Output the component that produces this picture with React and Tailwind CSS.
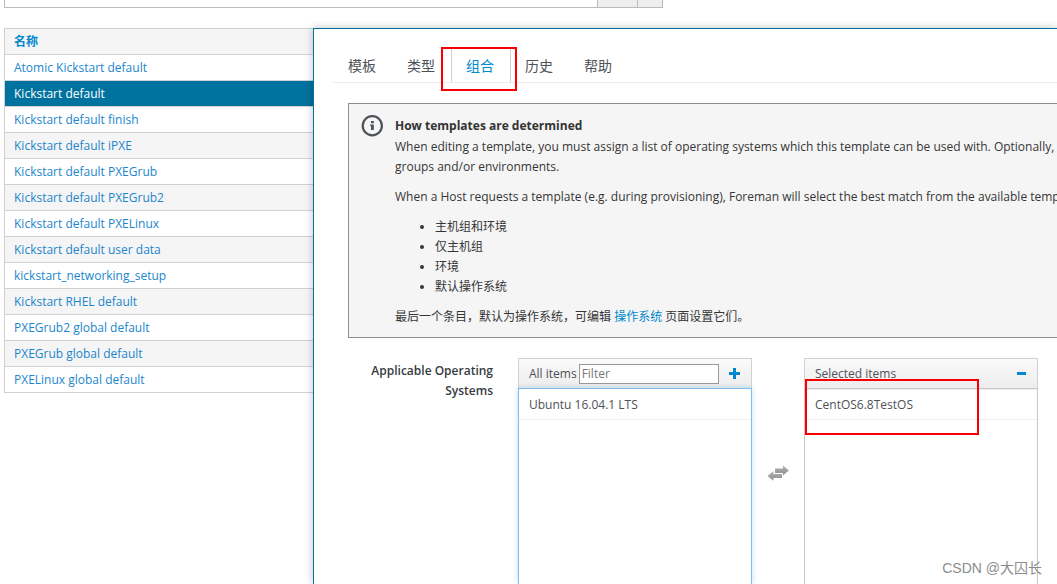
import React from 'react';

const templates = [
  'Atomic Kickstart default',
  'Kickstart default',
  'Kickstart default finish',
  'Kickstart default iPXE',
  'Kickstart default PXEGrub',
  'Kickstart default PXEGrub2',
  'Kickstart default PXELinux',
  'Kickstart default user data',
  'kickstart_networking_setup',
  'Kickstart RHEL default',
  'PXEGrub2 global default',
  'PXEGrub global default',
  'PXELinux global default',
];

const tabs = ['模板', '类型', '组合', '历史', '帮助'];

function SearchBar() {
  return (
    <form className="ml-1 flex h-2 w-[659px] items-end overflow-hidden">
      <input
        type="text"
        aria-label="Search"
        className="h-[26px] min-w-0 flex-1 border border-[#bbbbbb] bg-white px-2"
      />
      <button
        type="button"
        aria-label="Run search"
        className="-ml-px h-[26px] w-[41px] border border-[#bbbbbb] bg-[#eeeeee]"
      />
      <button
        type="button"
        aria-label="Search options"
        className="-ml-px h-[26px] w-[26px] border border-[#bbbbbb] bg-[#eeeeee]"
      />
    </form>
  );
}

function TemplateTable() {
  return (
    <table className="ml-1 w-[309px] shrink-0 border-separate border-spacing-0 self-start border-b border-l border-[#d1d1d1] text-left">
      <thead>
        <tr className="bg-[#f5f5f5]">
          <th className="h-[26px] border-t border-[#d1d1d1] px-[9px] py-0 font-bold">
            <a href="#name" className="block leading-[25px] text-[#0088ce]">
              名称
            </a>
          </th>
        </tr>
      </thead>
      <tbody>
        {templates.map((name) => (
          <tr
            key={name}
            className={
              name === 'Kickstart default'
                ? 'bg-[#00729f] text-white'
                : 'text-[#1c86cc] even:bg-[#f5f5f5]'
            }
          >
            <td className="h-[26px] border-t border-[#d1d1d1] px-[9px] py-0">
              <a href="#template" className="block leading-[25px]">
                {name}
              </a>
            </td>
          </tr>
        ))}
      </tbody>
    </table>
  );
}

function Tabs() {
  return (
    <ul className="ml-[19px] flex border-b border-[#ededec] text-sm">
      {tabs.map((tab, i) => {
        const active = tab === '组合';
        return (
          <li key={tab} className={i === 0 ? 'relative' : 'relative -ml-px'}>
            <a
              href="#tab"
              className={
                active
                  ? 'block border-x border-[#d1d1d1] pt-[7px] pr-4 pb-[6px] pl-3.5 leading-5 text-[#0088ce]'
                  : 'block border-x border-transparent pt-[7px] pr-4 pb-[6px] pl-3.5 leading-5 text-[#4d5258]'
              }
            >
              {tab}
            </a>
            {active && (
              <span className="pointer-events-none absolute -top-0.5 -right-[6px] -bottom-[9px] -left-[10px] border-2 border-[#f80000]" />
            )}
          </li>
        );
      })}
    </ul>
  );
}

function InfoIcon() {
  return (
    <svg className="-mt-px h-[22px] w-[22px] shrink-0" viewBox="0 0 22 22" aria-hidden="true">
      <circle cx="11.3" cy="10.7" r="9.6" fill="none" stroke="#4d5258" strokeWidth="2.2" />
      <path d="M10 6h2.8v2.3H10zM9.3 9.6h3.5V15H10v-3.8h-.7z" fill="#4d5258" />
    </svg>
  );
}

function Notice() {
  return (
    <section className="mt-5 ml-[34px] flex gap-3 overflow-hidden border border-r-0 border-[#8b8d8f] bg-[#f5f5f5] pt-3 pb-2.5 pl-3 whitespace-nowrap">
      <InfoIcon />
      <div>
        <h2 className="pb-px leading-5 font-bold text-[#333333]">How templates are determined</h2>
        <p className="leading-5">
          When editing a template, you must assign a list of operating systems which this template
          can be used with. Optionally,
          <br />
          groups and/or environments.
        </p>
        <p className="mt-2.5 leading-5">
          When a Host requests a template (e.g. during provisioning), Foreman will select the best
          match from the available temp
        </p>
        <ul className="mt-2.5 list-disc pl-10 leading-5">
          <li>主机组和环境</li>
          <li>仅主机组</li>
          <li>环境</li>
          <li>默认操作系统</li>
        </ul>
        <p className="mt-2.5 leading-5">
          最后一个条目，默认为操作系统，可编辑{' '}
          <a href="#os" className="text-[#0088ce]">
            操作系统
          </a>{' '}
          页面设置它们。
        </p>
      </div>
    </section>
  );
}

function SwapIcon() {
  return (
    <svg className="h-4 w-[22px]" viewBox="0 0 22 16" aria-hidden="true">
      <defs>
        <linearGradient id="swap-shade" x1="0" y1="0" x2="0" y2="1">
          <stop offset="0" stopColor="#b4b4b4" />
          <stop offset="1" stopColor="#8c8c8c" />
        </linearGradient>
      </defs>
      <path d="M8 3.4h8V0.6l5.8 5-5.8 5V7.9H8z" fill="url(#swap-shade)" />
      <path d="M15 8.9H6.4V6.1L0.6 11l5.8 4.7v-2.6H15z" fill="url(#swap-shade)" />
    </svg>
  );
}

function OperatingSystems() {
  return (
    <div className="mt-5 flex flex-1 pr-[19px]">
      <label
        htmlFor="os-filter"
        className="mr-[25px] w-[179px] shrink-0 pt-[3px] pl-12 text-right leading-5 font-semibold text-[#363b42]"
      >
        Applicable Operating Systems
      </label>
      <div className="flex min-w-0 flex-1 flex-col text-[#4d5258]">
        <div className="flex h-[30px] items-center gap-0.5 border border-b-0 border-[#d1d1d1] bg-linear-to-b from-[#fafafa] to-[#ededed] pr-[11px] pl-[10px]">
          <span className="leading-5">All items</span>
          <input
            id="os-filter"
            type="text"
            placeholder="Filter"
            className="h-5 w-[140px] min-w-0 border border-[#999999] bg-white px-0.5 placeholder:text-[#777777]"
          />
          <button type="button" aria-label="Add all" className="ml-auto">
            <svg className="h-[11px] w-[11px]" viewBox="0 0 11 11" aria-hidden="true">
              <path d="M4 0h3v4h4v3H7v4H4V7H0V4h4z" fill="#0088ce" />
            </svg>
          </button>
        </div>
        <ul className="flex-1 border border-b-0 border-[#7dbdec] bg-white shadow-[0_0_6px_rgba(0,136,206,0.25)]">
          <li className="border-b border-[#ededec] px-[10px] pt-1.5 pb-1 leading-5">
            Ubuntu 16.04.1 LTS
          </li>
        </ul>
      </div>
      <div className="flex w-[52px] shrink-0 justify-center pt-[107px]">
        <SwapIcon />
      </div>
      <div className="relative flex min-w-0 flex-1 flex-col text-[#4d5258]">
        <div className="flex h-[30px] items-center justify-between border border-b-0 border-[#d1d1d1] bg-linear-to-b from-[#fafafa] to-[#ededed] px-[10px]">
          <span className="leading-5">Selected items</span>
          <button type="button" aria-label="Remove all">
            <svg className="h-[3px] w-[11px]" viewBox="0 0 11 3" aria-hidden="true">
              <path d="M1 0h9v3H1z" fill="#0088ce" />
            </svg>
          </button>
        </div>
        <ul className="flex-1 border border-b-0 border-[#c8c8c8] bg-white shadow-[inset_0_1px_1px_rgba(0,0,0,0.08)]">
          <li className="border-b border-[#ededec] px-[10px] pt-1.5 pb-1 leading-5">
            CentOS6.8TestOS
          </li>
        </ul>
        <span className="pointer-events-none absolute top-[21px] left-px h-14 w-[174px] border-2 border-[#f80000]" />
      </div>
    </div>
  );
}

export default function App() {
  return (
    <div className="relative flex min-h-screen flex-col overflow-hidden bg-white font-['Open_Sans','Noto_Sans_CJK_SC',sans-serif] text-xs text-[#363636]">
      <SearchBar />
      <div className="mt-5 flex flex-1">
        <TemplateTable />
        <main className="flex min-w-0 flex-1 flex-col border-t border-l border-[#00729f] bg-white pt-5 shadow-[0_0_8px_rgba(3,3,3,0.25)]">
          <Tabs />
          <Notice />
          <OperatingSystems />
        </main>
      </div>
      <div className="absolute right-[15px] bottom-1.5 font-['Liberation_Sans','Noto_Sans_CJK_SC',sans-serif] text-sm leading-5 text-[#8c8c8c]">
        CSDN @大囚长
      </div>
    </div>
  );
}
